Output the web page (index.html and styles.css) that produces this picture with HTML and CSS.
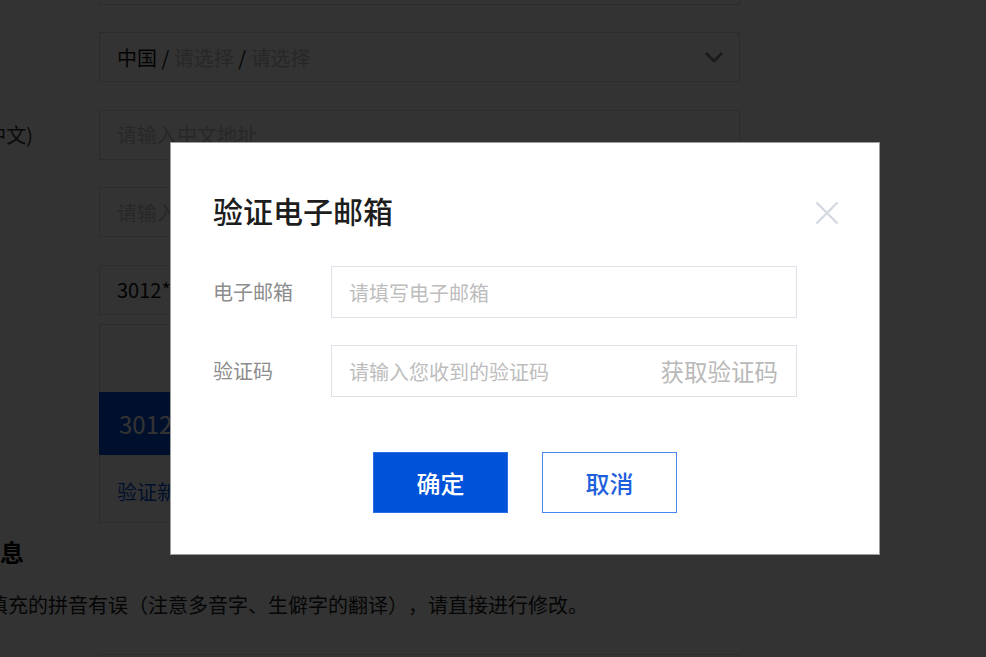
FILE: index.html
```html
<!DOCTYPE html>
<html lang="zh-CN">
<head>
<meta charset="utf-8">
<title>验证电子邮箱</title>
<link rel="stylesheet" href="styles.css">
</head>
<body>
<div class="page">
  <div class="form">
    <div class="label"></div>
    <div class="field"></div>

    <div class="label"></div>
    <div class="field select">
      <span class="val">中国</span><span class="sep"> / </span><span class="ph">请选择</span><span class="sep"> / </span><span class="ph">请选择</span>
      <svg class="chev" width="20" height="12" viewBox="0 0 20 12"><path d="M2 2 L10 10 L18 2" fill="none" stroke="#8a8a8a" stroke-width="3"/></svg>
    </div>

    <div class="label">地址(中文)</div>
    <div class="field"><span class="ph">请输入中文地址</span></div>

    <div class="label"></div>
    <div class="field"><span class="ph">请输入英文地址</span></div>

    <div class="label"></div>
    <div class="field"><span class="val">3012****@qq.com</span></div>

    <div class="label"></div>
    <div class="dropdown">
      <div class="dd-empty"></div>
      <div class="dd-active">3012****@qq.com</div>
      <div class="dd-link">验证新邮箱</div>
    </div>
  </div>

  <h3 class="sec-title">英文信息</h3>
  <p class="sec-tip">如自动填充的拼音有误（注意多音字、生僻字的翻译），请直接进行修改。</p>
  <div class="form">
    <div class="label"></div>
    <div class="field"></div>
  </div>
</div>

<div class="mask">
  <div class="dialog">
    <div class="dlg-head">
      <div class="dlg-title">验证电子邮箱</div>
      <svg class="dlg-close" width="24" height="24" viewBox="0 0 24 24"><path d="M1.5 1.5 L22.5 22.5 M22.5 1.5 L1.5 22.5" stroke="#d3d8e1" stroke-width="2.3" fill="none"/></svg>
    </div>
    <div class="dlg-form">
      <div class="dlg-label">电子邮箱</div>
      <div class="dlg-input"><span class="dlg-ph">请填写电子邮箱</span></div>
      <div class="dlg-label">验证码</div>
      <div class="dlg-input"><span class="dlg-ph">请输入您收到的验证码</span><span class="dlg-code">获取验证码</span></div>
    </div>
    <div class="dlg-foot">
      <div class="btn btn-primary">确定</div>
      <div class="btn btn-outline">取消</div>
    </div>
  </div>
</div>
</body>
</html>
```

FILE: styles.css
```css
html, body {
  margin: 0;
  padding: 0;
  background: #ffffff;
  overflow: hidden;
  width: 986px;
  height: 657px;
  font-family: "Noto Sans CJK SC", "Noto Sans", sans-serif;
  text-spacing-trim: space-all;
}

.page {
  margin-left: -72px;
  margin-top: -45.5px;
  width: 900px;
}

.form {
  display: grid;
  grid-template-columns: 171px 641px;
  row-gap: 27.5px;
}

.label {
  font-size: 20px;
  color: #333;
  text-align: right;
  padding-right: 66px;
  line-height: 50px;
  white-space: nowrap;
}

.field {
  box-sizing: border-box;
  height: 50px;
  border: 1px solid #dcdcdc;
  display: flex;
  align-items: center;
  padding: 0 15px 0 17px;
  font-size: 20px;
  white-space: nowrap;
}

.val { color: #111; }
.sep { color: #111; white-space: pre; }
.ph { color: #c4c4c4; }

.select .chev { margin-left: auto; }

.dropdown {
  margin-top: -18px;
  box-sizing: border-box;
  height: 199px;
  border: 1px solid #dcdcdc;
  display: flex;
  flex-direction: column;
}

.dd-empty { height: 67px; }

.dd-active {
  height: 63px;
  background: #0052d9;
  color: #ffffff;
  font-size: 24px;
  line-height: 63px;
  padding-left: 20px;
  margin-left: -1px;
}

.dd-link {
  padding: 22px 18px 0 17px;
  font-size: 20px;
  line-height: 30px;
  color: #0052d9;
}

.sec-title {
  margin: 13px 0 0 0;
  font-size: 24px;
  line-height: 32px;
  font-weight: 700;
  color: #000;
}

.sec-tip {
  margin: 22px 0 34px 0;
  font-size: 20px;
  line-height: 30px;
  color: #222;
  white-space: nowrap;
  text-spacing-trim: space-all;
}

/* modal */
.mask {
  position: fixed;
  left: 0;
  top: 0;
  right: 0;
  bottom: 0;
  background: rgba(0, 0, 0, 0.8);
  padding: 142px 0 0 170px;
}

.dialog {
  box-sizing: border-box;
  width: 710px;
  height: 413px;
  background: #ffffff;
  border: 1px solid #9d9d9d;
  padding: 47px 42px 41px 42px;
  display: flex;
  flex-direction: column;
}

.dlg-head {
  display: flex;
  align-items: flex-start;
  height: 40px;
}

.dlg-title {
  flex: 1;
  font-size: 30px;
  line-height: 40px;
  font-weight: 500;
  color: #1d1d1d;
}

.dlg-close {
  margin-top: 11px;
  margin-right: -2px;
}

.dlg-form {
  margin-top: 36px;
  display: grid;
  grid-template-columns: 118px 466px;
  row-gap: 27px;
}

.dlg-label {
  font-size: 20px;
  line-height: 52px;
  color: #8c8c8c;
}

.dlg-input {
  box-sizing: border-box;
  height: 52px;
  border: 1px solid #dde1e8;
  display: flex;
  align-items: center;
  padding: 0 18px 0 17px;
  white-space: nowrap;
}

.dlg-ph {
  font-size: 20px;
  color: #bdbdbd;
}

.dlg-code {
  margin-left: auto;
  font-size: 23.5px;
  color: #b9b9b9;
}

.dlg-foot {
  margin-top: 55px;
  display: flex;
  justify-content: center;
  gap: 34px;
}

.btn {
  box-sizing: border-box;
  width: 135px;
  height: 61px;
  display: flex;
  align-items: center;
  justify-content: center;
  font-size: 24px;
  font-weight: 500;
}

.btn-primary {
  background: #0052d9;
  color: #ffffff;
  border: 1px solid #2a6ce6;
}

.btn-outline {
  background: #ffffff;
  color: #1e5fdd;
  border: 1px solid #4886ef;
}
```
